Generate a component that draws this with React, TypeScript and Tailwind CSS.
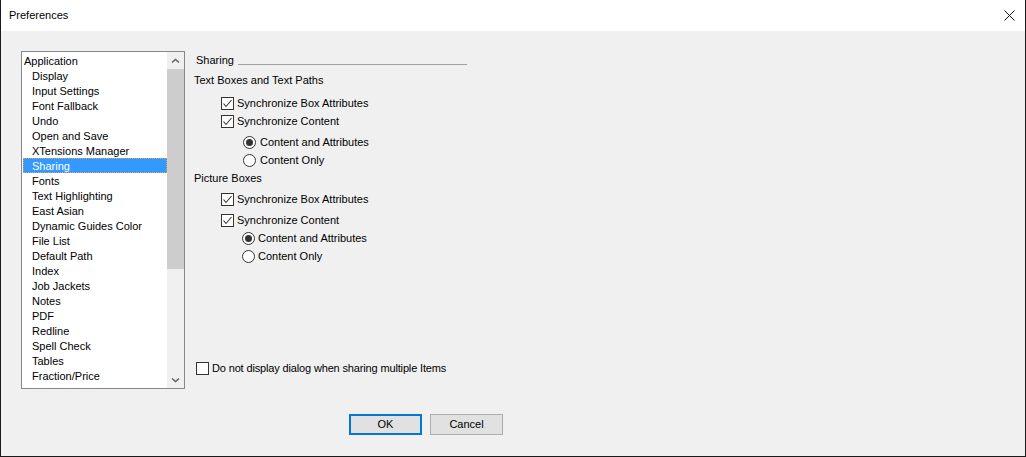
import React from "react";

const categories = [
  "Display",
  "Input Settings",
  "Font Fallback",
  "Undo",
  "Open and Save",
  "XTensions Manager",
  "Sharing",
  "Fonts",
  "Text Highlighting",
  "East Asian",
  "Dynamic Guides Color",
  "File List",
  "Default Path",
  "Index",
  "Job Jackets",
  "Notes",
  "PDF",
  "Redline",
  "Spell Check",
  "Tables",
  "Fraction/Price",
];

const CheckBox = ({ checked }: { checked: boolean }) => (
  <svg width="13" height="13" viewBox="0 0 13 13" className="flex-none">
    <rect x="0.5" y="0.5" width="12" height="12" fill="#fff" stroke="#333" />
    {checked && (
      <polyline
        points="2.5,6.5 5,9.5 10.5,3"
        fill="none"
        stroke="#333"
        strokeWidth="1.1"
      />
    )}
  </svg>
);

const Radio = ({ checked }: { checked: boolean }) => (
  <svg width="13" height="13" viewBox="0 0 13 13" className="flex-none">
    <circle cx="6.5" cy="6.5" r="6" fill="#fff" stroke="#333" />
    {checked && <circle cx="6.5" cy="6.5" r="3.5" fill="#333" />}
  </svg>
);

const Chevron = ({ down }: { down?: boolean }) => (
  <svg width="9" height="6" viewBox="0 0 9 6">
    <polyline
      points={down ? "1,1.5 4.5,4.5 8,1.5" : "1,4.5 4.5,1.5 8,4.5"}
      fill="none"
      stroke="#606060"
      strokeWidth="1.5"
    />
  </svg>
);

const App = () => {
  return (
    <div className="w-[1026px] h-[457px] flex flex-col bg-[#f0f0f0] border-x border-b border-[#1a1a1a] font-['Liberation_Sans',Arial,sans-serif] text-[11px] text-black">
      {/* Title bar */}
      <div className="h-[31px] flex-none bg-white flex items-center justify-between pl-[8px] pr-[10px]">
        <span className="text-[11px]">Preferences</span>
        <svg width="11" height="11" viewBox="0 0 11 11">
          <path d="M0.5 0.5 L10.5 10.5 M10.5 0.5 L0.5 10.5" stroke="#111" strokeWidth="1" />
        </svg>
      </div>

      <div className="flex pt-[20px] pl-[20px]">
        {/* Category list */}
        <div className="w-[164px] h-[338px] border border-[#828790] bg-white flex">
          <div className="flex-1 pt-[1px] leading-[17px]">
            <div className="h-[15px] ml-[1px] pl-[1px]">Application</div>
            {categories.map((c) =>
              c === "Sharing" ? (
                <div
                  key={c}
                  className="h-[15px] ml-[1px] pl-[8px] bg-[#3399ff] text-white border border-dotted border-[#d9a066] leading-[15px]"
                >
                  {c}
                </div>
              ) : (
                <div key={c} className="h-[15px] ml-[1px] pl-[9px]">
                  {c}
                </div>
              )
            )}
          </div>
          <div className="w-[17px] flex flex-col bg-[#f0f0f0]">
            <div className="h-[17px] flex items-center justify-center">
              <Chevron />
            </div>
            <div className="h-[200px] bg-[#cdcdcd]" />
            <div className="flex-1" />
            <div className="h-[17px] flex items-center justify-center">
              <Chevron down />
            </div>
          </div>
        </div>

        {/* Sharing panel */}
        <div className="ml-[9px] mt-[1px] h-[337px] flex flex-col leading-[16px]">
          <div className="h-[16px] flex items-start">
            <span className="w-[44px] pl-[2px]">Sharing</span>
            <div className="mt-[12px] h-px w-[229px] bg-[#a0a0a0]" />
          </div>

          <div className="h-[16px] mt-[4px]">Text Boxes and Text Paths</div>
          <div className="h-[16px] mt-[7px] pl-[27px] flex items-center gap-[3px]">
            <CheckBox checked />
            <span>Synchronize Box Attributes</span>
          </div>
          <div className="h-[16px] mt-[2px] pl-[27px] flex items-center gap-[3px]">
            <CheckBox checked />
            <span>Synchronize Content</span>
          </div>
          <div className="h-[16px] mt-[5px] pl-[49px] flex items-center gap-[4px]">
            <Radio checked />
            <span>Content and Attributes</span>
          </div>
          <div className="h-[16px] mt-[2px] pl-[49px] flex items-center gap-[4px]">
            <Radio checked={false} />
            <span>Content Only</span>
          </div>

          <div className="h-[16px] mt-[2px]">Picture Boxes</div>
          <div className="h-[16px] mt-[5px] pl-[27px] flex items-center gap-[3px]">
            <CheckBox checked />
            <span>Synchronize Box Attributes</span>
          </div>
          <div className="h-[16px] mt-[5px] pl-[27px] flex items-center gap-[3px]">
            <CheckBox checked />
            <span>Synchronize Content</span>
          </div>
          <div className="h-[16px] mt-[2px] pl-[48px] flex items-center gap-[3px]">
            <Radio checked />
            <span>Content and Attributes</span>
          </div>
          <div className="h-[16px] mt-[2px] pl-[48px] flex items-center gap-[3px]">
            <Radio checked={false} />
            <span>Content Only</span>
          </div>

          <div className="h-[16px] mt-auto mb-[13px] pl-[2px] flex items-center gap-[3px]">
            <CheckBox checked={false} />
            <span className="tracking-[-0.15px]">Do not display dialog when sharing multiple Items</span>
          </div>
        </div>
      </div>

      {/* Buttons */}
      <div className="flex pl-[348px] mt-[25px] gap-[8px]">
        <button className="w-[73px] h-[21px] bg-[#e1e1e1] border-2 border-[#0078d7] text-[11px] leading-none">
          OK
        </button>
        <button className="w-[73px] h-[21px] bg-[#e1e1e1] border border-[#adadad] text-[11px] leading-none">
          Cancel
        </button>
      </div>
    </div>
  );
};

export default App;
